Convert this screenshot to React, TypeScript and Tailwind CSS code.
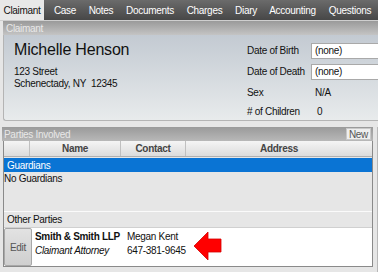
const tabs: [string, string][] = [
  ['Case', 'w-[34px]'],
  ['Notes', 'w-[38px]'],
  ['Documents', 'w-[60px]'],
  ['Charges', 'w-[49px]'],
  ['Diary', 'w-[34px]'],
  ['Accounting', 'w-[59px]'],
  ['Questions', 'w-[56px]'],
]

function RedArrow() {
  return (
    <svg width="28" height="29" viewBox="0 0 28 29" className="shrink-0">
      <polygon points="0,14 14,0 14,7 27,7 27,20 14,20 14,28" fill="#ff0000" stroke="#d40000" strokeWidth="0.8" />
    </svg>
  )
}

export default function App() {
  return (
    <div className="w-[378px] h-[272px] overflow-hidden bg-[#e6e6e6] font-['Liberation_Sans',Arial,sans-serif] text-[10px] tracking-[-0.3px] text-[#111] flex flex-col">
      {/* Tabs */}
      <div className="h-[21px] flex items-stretch bg-gradient-to-b from-[#6b6b6b] to-[#474747] border-b border-[#cfcfcf]">
        <div className="w-[44px] flex items-center justify-center bg-[#e8e8e8] text-[#111]">Claimant</div>
        <div className="w-[4px]" />
        {tabs.map(([t, w]) => (
          <div key={t} className={`${w} flex items-center justify-center text-white whitespace-nowrap`}>
            {t}
          </div>
        ))}
      </div>

      {/* Claimant panel */}
      <div className="pl-[3px] flex flex-col">
        <div className="h-[14px] pl-[3px] flex items-center bg-gradient-to-b from-[#9a9a9a] to-[#c4c4c4] text-[#e8e8e8]">
          Claimant
        </div>
        <div className="h-[86px] flex bg-gradient-to-b from-[#c3cad2] to-[#e8ebec] border-l border-b border-[#b4b4b4] rounded-bl-[3px]">
          <div className="flex-1 pl-[10px] pt-[5px]">
            <div className="text-[16px] leading-[20px] tracking-[-0.2px] text-[#111]">Michelle Henson</div>
            <div className="mt-[6px] leading-[12px]">
              <div>123 Street</div>
              <div>Schenectady, NY&nbsp; 12345</div>
            </div>
          </div>
          <div className="w-[131px] pt-[7px] grid grid-cols-[64px_1fr] items-center">
            <div>Date of Birth</div>
            <div className="h-[16px] pl-[3px] flex items-center bg-white border border-[#a9a9a9] border-r-0">(none)</div>
            <div className="mt-[4px]">Date of Death</div>
            <div className="mt-[4px] h-[16px] pl-[3px] flex items-center bg-white border border-[#a9a9a9] border-r-0">(none)</div>
            <div className="mt-[4px] h-[14px] flex items-center">Sex</div>
            <div className="mt-[4px] pl-[4px]">N/A</div>
            <div className="mt-[3px] h-[16px] flex items-center">#&nbsp;of Children</div>
            <div className="mt-[3px] pl-[6px]">0</div>
          </div>
        </div>
      </div>

      {/* Parties Involved */}
      <div className="mt-[6px] pl-[2px] pr-[4px] flex-1 flex flex-col border-r border-[#b8b8b8]">
        <div className="h-[14px] pl-[2px] pr-[2px] flex items-center justify-between bg-gradient-to-b from-[#9a9a9a] to-[#b8b8b8] text-[#e8e8e8]">
          <span>Parties Involved</span>
          <span className="h-[12px] px-[2px] flex items-center bg-[#eeeeee] text-[#555] border border-[#c8c8c8]">New</span>
        </div>
        <div className="ml-[1px] flex-1 flex flex-col border border-t-0 border-[#8a8a8a] bg-[#e6e6e6]">
          <div className="h-[16px] grid grid-cols-[26px_91px_65px_1fr] bg-gradient-to-b from-[#f5f5f5] to-[#dcdcdc] border-b border-[#b0b0b0] text-[#444] font-bold">
            <div className="border-r border-[#c0c0c0]" />
            <div className="flex items-center justify-center border-r border-[#c0c0c0]">Name</div>
            <div className="flex items-center justify-center border-r border-[#c0c0c0]">Contact</div>
            <div className="flex items-center justify-center">Address</div>
          </div>
          <div className="h-[14px] mt-[1px] pl-[3px] flex items-center bg-[#0a74d4] text-white">Guardians</div>
          <div className="h-[13px] flex items-center">No Guardians</div>
          <div className="h-[27px] border-b border-[#fafafa]" />
          <div className="h-[15px] pl-[3px] flex items-center">Other Parties</div>
          <div className="h-[39px] flex bg-white border-t border-[#d0d0d0]">
            <div className="w-[28px] flex items-center justify-center bg-gradient-to-b from-[#e2e2e2] to-[#cfcfcf] border border-[#a8a8a8] rounded-[2px] text-[#555]">
              Edit
            </div>
            <div className="w-[95px] pl-[3px] pt-[2px] leading-[14px] whitespace-nowrap">
              <div className="font-bold">Smith &amp; Smith LLP</div>
              <div className="italic">Claimant Attorney</div>
            </div>
            <div className="w-[67px] pt-[2px] leading-[14px] whitespace-nowrap">
              <div>Megan Kent</div>
              <div>647-381-9645</div>
            </div>
            <div className="pt-[4px]">
              <RedArrow />
            </div>
          </div>
        </div>
        <div className="h-[5px]" />
      </div>
    </div>
  )
}
